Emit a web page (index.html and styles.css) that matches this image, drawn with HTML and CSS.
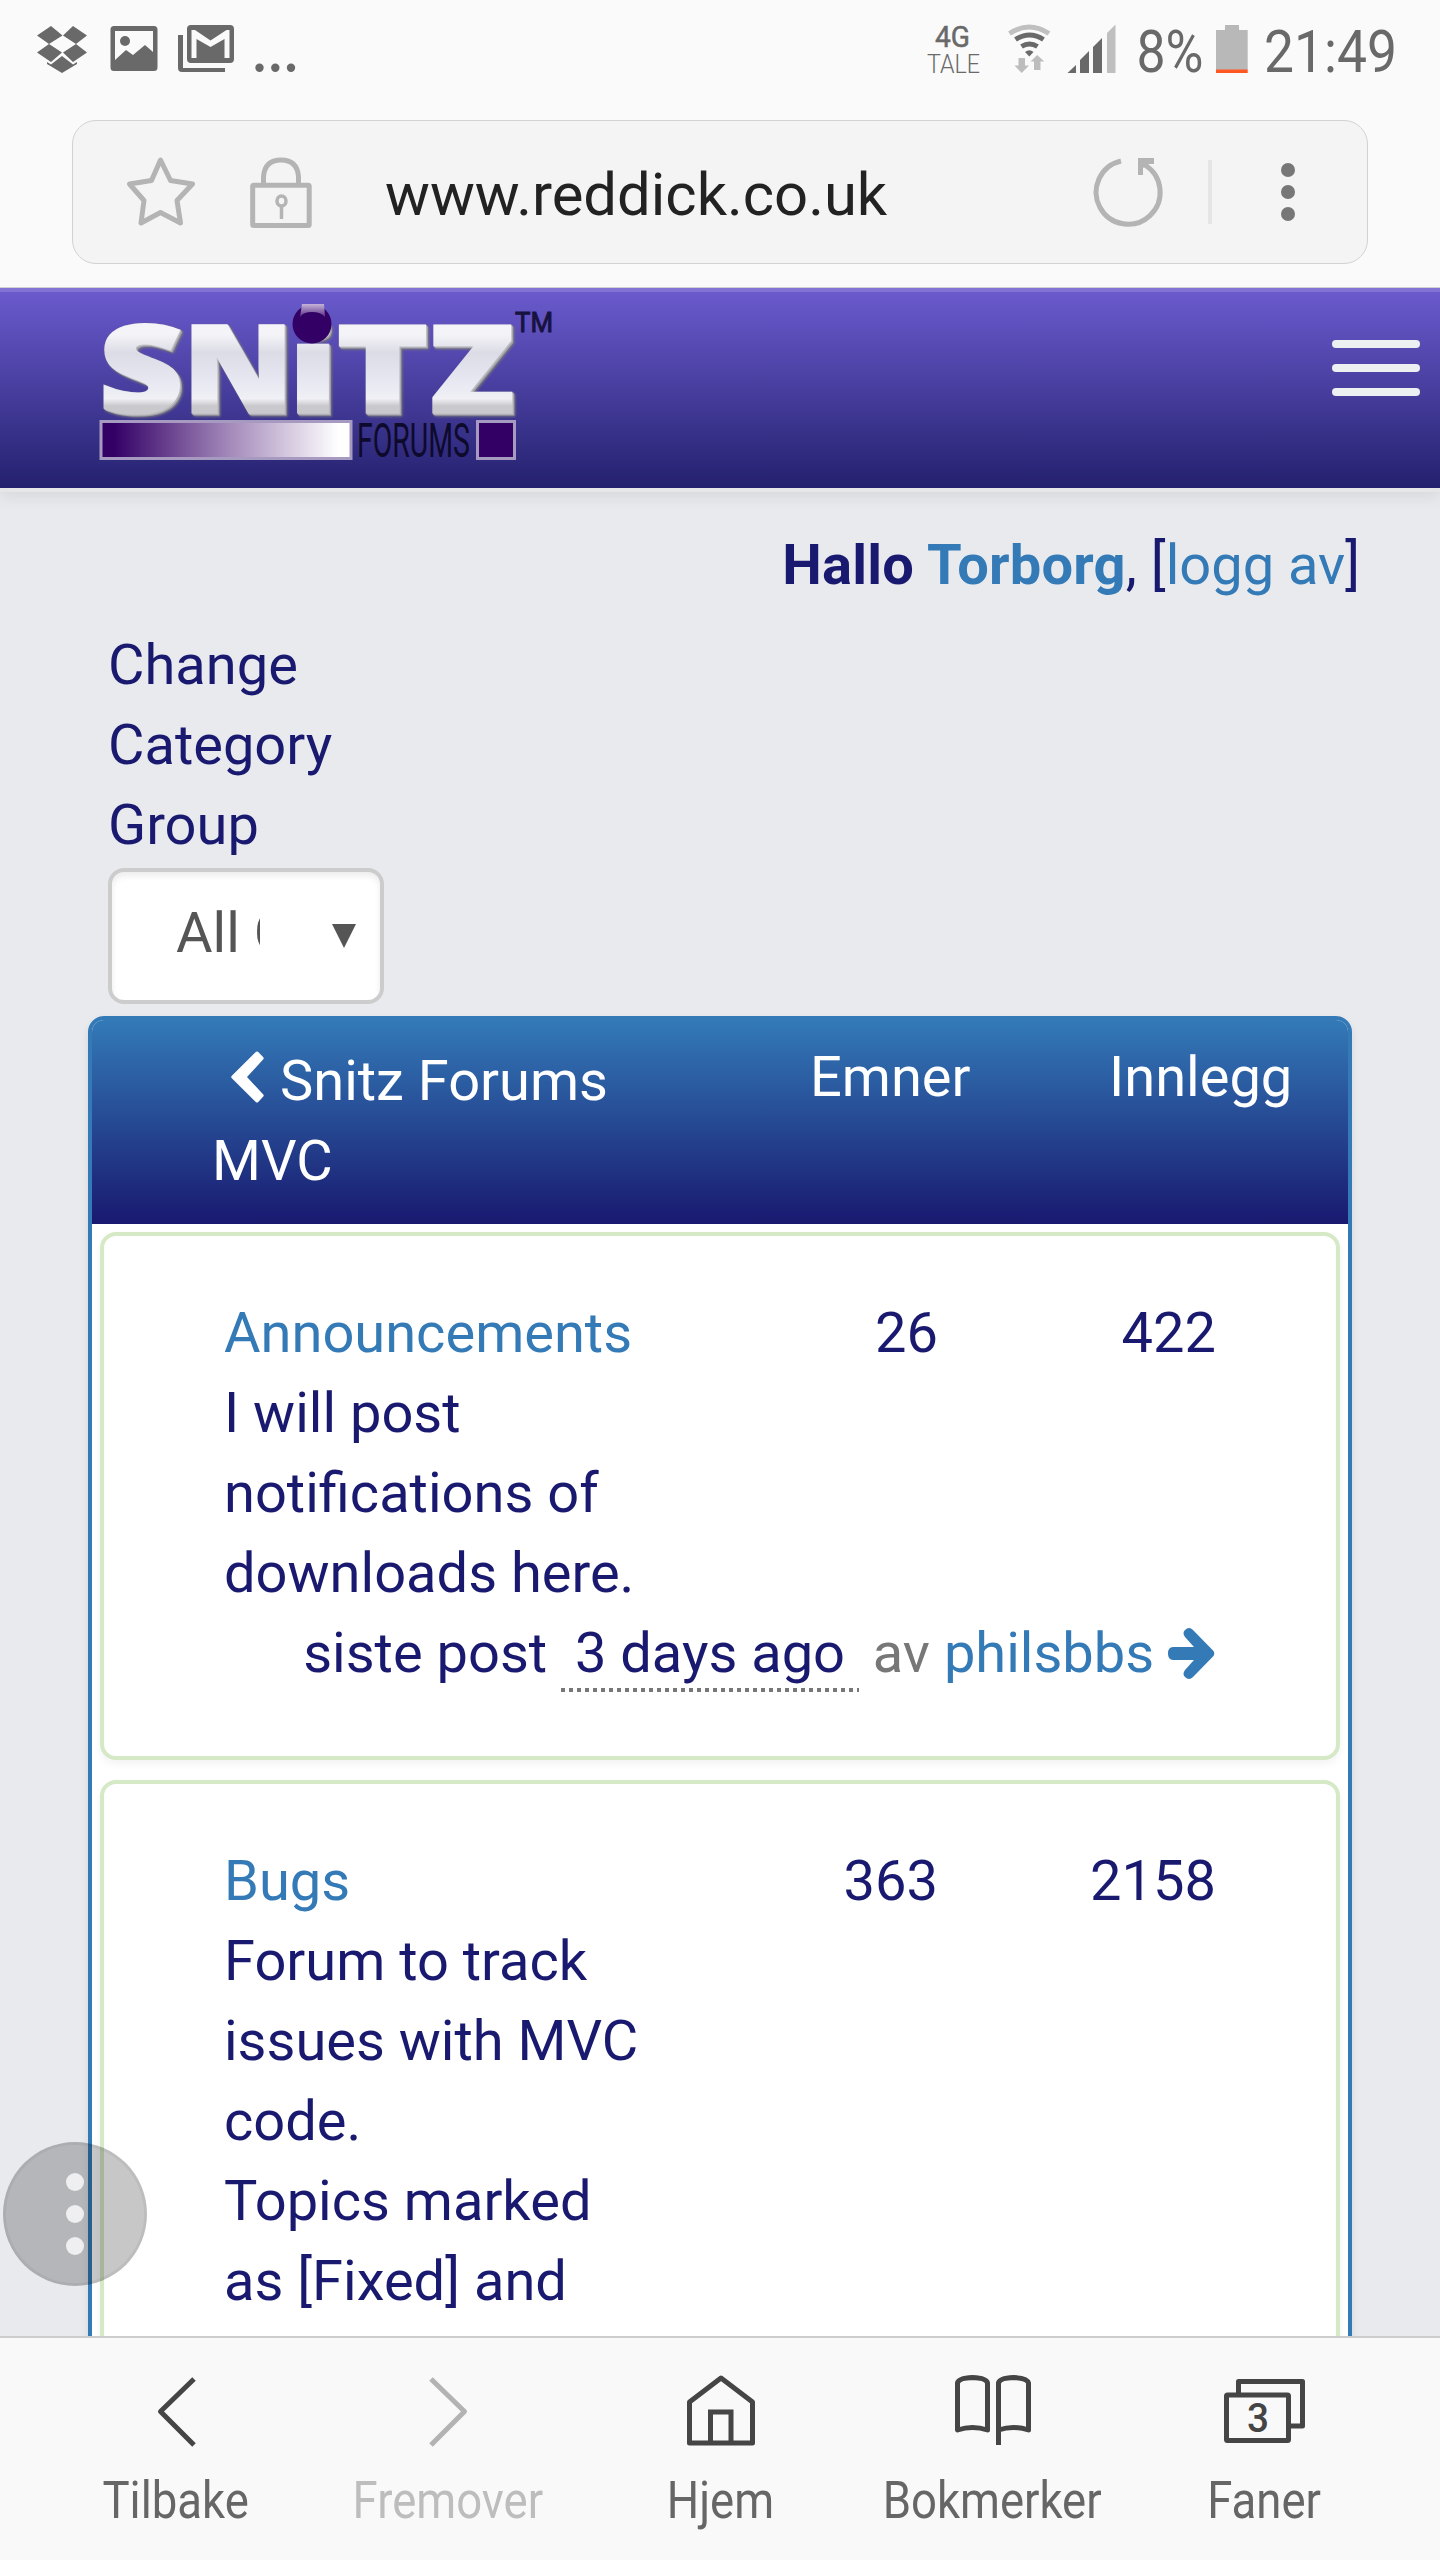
FILE: index.html
```html
<!DOCTYPE html>
<html lang="no">
<head>
<meta charset="utf-8">
<title>Snitz Forums MVC</title>
<link rel="stylesheet" href="styles.css">
</head>
<body>
<div class="phone">
  <header class="status">
    <svg class="status-left" width="320" height="100" viewBox="0 0 320 100" fill="#696969">
      <path d="M51 26l11.500 9.500L49 44 37 35.500zM73 26l14 9.500L76 44 63 35.500zM49 44l13 8.500L51 62 37 52.500zM76 44l11 8.500L73 62 63 52.500zM62 56l11 8.500 4-2.500v2L62 73 47 64v-2l4 2.500z"/>
      <path fill-rule="evenodd" d="M114 26h40q3.500 0 3.500 3.500v38q0 3.500-3.500 3.500h-40q-3.500 0-3.500-3.500v-38q0-3.500 3.500-3.500zM115 31v29l11-10 7 5 12-10 8 7V31z"/>
      <circle cx="125" cy="41" r="5"/>
      <path fill-rule="evenodd" d="M191 25h39q4 0 4 4v30q0 4-4 4h-39q-4 0-4-4V29q0-4 4-4zM191.500 30v28h5V39l14 8 14-8v19h5V30h-3l-16 10.500L195 30z"/>
      <path d="M178 35h5v33h42v4h-43q-4 0-4-4z"/>
      <circle cx="259.500" cy="67.700" r="4.200"/><circle cx="275.300" cy="67.700" r="4.200"/><circle cx="291" cy="67.700" r="4.200"/>
    </svg>
    <svg class="status-right" width="520" height="100" viewBox="920 0 520 100" fill="#696969">
      <text class="net" x="935" y="46.500" font-size="30" font-weight="400" stroke="#696969" stroke-width=".5" textLength="35" lengthAdjust="spacingAndGlyphs">4G</text>
      <text class="net" x="927" y="72.500" font-size="26" font-weight="300" textLength="53" lengthAdjust="spacingAndGlyphs">TALE</text>
      <g fill="none" stroke="#696969" stroke-width="5">
        <path stroke="#c0c0c0" d="M1009.500 33.500q19.500-13 39.500 0"/>
        <path d="M1015.500 39.500q14-9 28 0M1021.500 46.500q8-5 16 0"/>
      </g>
      <path d="M1025 52q4.500-3.500 8.500 0l-4.200 4.500z"/>
      <path fill="#bdbdbd" d="M1018.500 58h6.500v7.500h4L1021.700 73l-7.200-7.500h4zM1034 70h6.500v-8.500h3.800L1037.200 55l-6.700 6.500h3.500z"/>
      <path d="M1067.500 73l8.500-8v8zM1080 73V60l9-9v22zM1093 73V47l9-9v35z"/>
      <path fill="#bfbfbf" d="M1107 73V33l8.500-8.500V73z"/>
      <text x="1136.500" y="71.500" font-size="60" textLength="67" lengthAdjust="spacingAndGlyphs">8%</text>
      <path fill="#b8b8b8" d="M1216 30h9v-5h14v5h8.700v40H1216z"/>
      <path fill="#ff5722" d="M1216 69.500h31.700V73H1216z"/>
      <text x="1264" y="71.500" font-size="60" textLength="133" lengthAdjust="spacingAndGlyphs">21:49</text>
    </svg>
  </header>

  <div class="address">
    <div class="url-box">
      <svg width="200" height="80" viewBox="122 152 200 80" fill="none" stroke="#b4b4b4" stroke-width="5" stroke-linejoin="round">
        <path d="M160.500 160l10 20.500 22 3.500-15.500 16.500 3.500 22.500-20-10.500-19.500 10.500 3-22.500-14.500-16.500 22-3.500z"/>
        <path d="M263.500 184v-7q1-17 17.500-17t17.500 17v7"/>
        <rect x="252.700" y="185.200" width="56.500" height="40.300" rx="1"/>
        <ellipse cx="281.500" cy="201" rx="4.500" ry="5" stroke-width="3.500"/>
        <path stroke-width="3.500" d="M281.500 206v13"/>
      </svg>
      <span class="url">www.reddick.co.uk</span>
      <svg width="220" height="80" viewBox="1087 152 220 80">
        <path fill="none" stroke="#b4b4b4" stroke-width="5" d="M1120 161a32 32 0 1 0 24 4"/>
        <path fill="#b4b4b4" d="M1137 158h16v6h-5l-6 4v7h-5z"/>
        <path fill="#e5e5e5" d="M1207 160h4v64h-4z"/>
        <g fill="#777"><circle cx="1287" cy="170" r="7"/><circle cx="1287" cy="192" r="7"/><circle cx="1287" cy="214" r="7"/></g>
      </svg>
    </div>
  </div>

  <main class="site">
    <div class="navbar">
      <svg class="logo" width="460" height="160" viewBox="100 304 460 160">
        <defs>
          <linearGradient id="silver" gradientUnits="userSpaceOnUse" x1="0" y1="325" x2="0" y2="417">
            <stop offset="0.100" stop-color="#f4f4f8"/><stop offset="0.300" stop-color="#dcdce6"/><stop offset="0.600" stop-color="#e6e7f1"/><stop offset="0.800" stop-color="#f0f0f5"/><stop offset="0.880" stop-color="#c8c8cd"/>
          </linearGradient>
          <linearGradient id="bar"><stop offset="0.050" stop-color="#330066"/><stop offset="0.470" stop-color="#9a7db3"/><stop offset="0.950" stop-color="#fff"/></linearGradient>
          <linearGradient id="shine" x1="0" y1="0" x2="0" y2="1"><stop offset="0" stop-color="#c5b3d8"/><stop offset="1" stop-color="#5a2f86"/></linearGradient>
        </defs>
        <g class="wordmark">
          <text x="99" y="412" textLength="84" lengthAdjust="spacingAndGlyphs">S</text>
          <text x="183" y="412" textLength="110" lengthAdjust="spacingAndGlyphs">N</text>
          <text x="289" y="412" textLength="48" lengthAdjust="spacingAndGlyphs">i</text>
          <text x="337" y="412" textLength="91" lengthAdjust="spacingAndGlyphs">T</text>
          <text x="430" y="412" textLength="84" lengthAdjust="spacingAndGlyphs">Z</text>
        </g>
        <circle cx="312" cy="324" r="19.500" fill="#330066"/>
        <path fill="url(#shine)" d="M302 304h22l1 13q-4-5-13-5t-12 5z"/>
        <rect x="101" y="421.500" width="250" height="37" fill="url(#bar)" stroke="#a79ac0" stroke-width="3"/>
        <text class="forums" x="357" y="457" textLength="113" lengthAdjust="spacingAndGlyphs">FORUMS</text>
        <rect x="477.500" y="421.500" width="37" height="37" fill="#330066" stroke="#a79ac0" stroke-width="3"/>
        <text class="tm" x="515" y="332" textLength="38" lengthAdjust="spacingAndGlyphs">TM</text>
      </svg>
      <div class="burger"><i></i><i></i><i></i></div>
    </div>

    <p class="greeting"><b>Hallo <a>Torborg</a></b>, [<a>logg av</a>]</p>

    <div class="filter">
      <label>Change Category Group</label>
      <div class="select"><span class="value">All Groups</span><span class="caret"></span></div>
    </div>

    <section class="panel">
      <div class="panel-head">
        <div class="title"><svg class="chev" width="33" height="52" viewBox="0 0 33 52"><path fill="#fff" d="M25 .8q1-.8 2 0l5.300 5.500q.8 1 0 2L16 26l16.300 17.500q.8 1 0 2L27 51.200q-1 .8-2 0L.6 27q-.8-1 0-2z"/></svg>Snitz Forums MVC</div>
        <div class="col-a">Emner</div>
        <div class="col-b">Innlegg</div>
      </div>

      <article class="card">
        <div class="row">
          <div class="desc"><a>Announcements</a><br>I will post notifications of downloads here.</div>
          <div class="num topics">26</div>
          <div class="num posts">422</div>
        </div>
        <div class="last">siste post <span class="ago">&nbsp;3 days ago&nbsp;</span> <span class="muted">av</span> <a>philsbbs</a> <svg class="arrow" width="47" height="51" viewBox="0 0 47 51"><path fill="#337ab7" d="M5 19h21L17 9q-3-4 0-7 4-4 8 0l20.500 21q1.500 2.500 0 5L25 49q-4 4-8 0-3-3 0-7l9-10H5q-5 0-5-6.500T5 19z"/></svg></div>
      </article>

      <article class="card">
        <div class="row">
          <div class="desc"><a>Bugs</a><br>Forum to track issues with MVC code.<br>Topics marked as [Fixed] and</div>
          <div class="num topics">363</div>
          <div class="num posts">2158</div>
        </div>
      </article>
    </section>
  </main>

  <nav class="toolbar">
    <div class="tab"><svg width="80" height="80" viewBox="136 2370 80 80"><path d="M194 2379l-33.500 32.500L194 2445"/></svg><span>Tilbake</span></div>
    <div class="tab off"><svg width="80" height="80" viewBox="408 2370 80 80"><path d="M431 2379l33.500 32.500L431 2445"/></svg><span>Fremover</span></div>
    <div class="tab"><svg width="80" height="80" viewBox="680 2370 80 80"><path d="M689.500 2443v-41l31.500-24 31.500 24v41z"/><path stroke-linejoin="miter" d="M710.500 2443v-31h20.500v31"/></svg><span>Hjem</span></div>
    <div class="tab"><svg width="80" height="80" viewBox="952 2370 80 80"><path d="M957.500 2430v-47q1-5 15-5.500 14 .5 15 5.500v47q-15-5-30 0zM998.500 2445v-62q1-5 15-5.500 14 .5 15 5.500v47q-15-5-30 0"/></svg><span>Bokmerker</span></div>
    <div class="tab"><svg width="88" height="80" viewBox="1220 2370 88 80"><path d="M1238.500 2393v-11.500h64V2426H1290"/><rect x="1226.500" y="2395" width="62" height="45.500" rx="1"/><text x="1247" y="2432" textLength="22" lengthAdjust="spacingAndGlyphs">3</text></svg><span>Faner</span></div>
  </nav>

  <div class="floater"><i></i><i></i><i></i></div>
</div>
</body>
</html>
```
FILE: styles.css
```css
* { box-sizing: border-box; }
body { margin: 0; font-family: Roboto, "Liberation Sans", sans-serif; }
svg { display: block; flex: none; }
a { color: #337ab7; }

.phone {
  position: relative;
  width: 1440px;
  height: 2560px;
  display: flex;
  flex-direction: column;
  overflow: hidden;
  background: #fafafa;
}

.status { height: 100px; flex: none; display: flex; justify-content: space-between; }
.address { height: 188px; flex: none; padding: 20px 72px 0; border-bottom: 1px solid #d0d0d0; }
.url-box {
  height: 144px;
  display: flex;
  align-items: center;
  padding: 0 59px 0 49px;
  border: 1px solid #d2d2d2;
  border-radius: 24px;
  background: #f4f4f4;
}
.url { flex: 1; padding-left: 63px; font-size: 59.8px; line-height: 80px; padding-top: 6px; color: #222; }

.site { flex: 1; min-height: 0; overflow: hidden; background: #e8eaee; color: #191970; font-size: 56px; line-height: 80px; }
.navbar {
  height: 204px;
  display: flex;
  justify-content: space-between;
  padding: 12px 20px 0 100px;
  border-top: 4px solid #8273d4;
  border-bottom: 4px solid #e6e6e6;
  background: linear-gradient(#6a5acd, #24216e) padding-box;
  box-shadow: 0 4px 16px rgba(0, 0, 0, .09);
}
.logo { overflow: visible; }
.wordmark {
  font-family: "Open Sans", sans-serif;
  font-weight: 800;
  font-size: 120px;
  fill: url(#silver);
  stroke: url(#silver);
  stroke-width: 3;
  filter: drop-shadow(1px 1px 0 #bcbcc2) drop-shadow(1px 1px 0 #a0a0a5) drop-shadow(1px 1px 1px #77777c);
}
.forums { font-family: Roboto, sans-serif; font-size: 48px; fill: #0d0a2c; }
.tm { font-family: Roboto, sans-serif; font-size: 28px; fill: #17123f; stroke: #17123f; stroke-width: 1; }
.burger { width: 88px; display: flex; flex-direction: column; gap: 16px; padding-top: 36px; }
.burger i { height: 8px; border-radius: 4px; background: #ecf0f1; }

.greeting { margin: 33px 80px 0 0; text-align: right; }
.greeting b { letter-spacing: .25px; }

.filter { width: 276px; margin: 20px 0 12px 108px; }
.filter label { display: block; width: 240px; }
.select {
  height: 136px;
  margin-top: 3px;
  display: flex;
  align-items: center;
  justify-content: space-between;
  padding: 0 24px 6px 64px;
  border: 4px solid #ccc;
  border-radius: 16px;
  background: #fff;
  box-shadow: inset 0 4px 6px rgba(0, 0, 0, .075);
  color: #555;
}
.value { width: 84px; overflow: hidden; white-space: nowrap; }
.caret { width: 24px; height: 24px; margin-top: 6px; background: #555; clip-path: polygon(0 0, 100% 0, 50% 100%); }

.panel { width: 1264px; margin-left: 88px; border: 4px solid #337ab7; border-radius: 16px; background: #fff; box-shadow: 0 4px 8px rgba(0, 0, 0, .08); }
.panel-head {
  height: 204px;
  display: grid;
  grid-template-columns: 597px 300px 1fr;
  padding: 17px 0 0 120px;
  border-radius: 12px 12px 0 0;
  background: linear-gradient(#337ab7, #191970);
  color: #fff;
}
.title { width: 430px; padding-top: 4px; }
.chev { display: inline-block; margin: 0 16px 0 19px; vertical-align: -3px; }
.col-a { padding-left: 1px; }

.card {
  height: 528px;
  margin: 8px 8px 20px;
  padding: 57px 120px 0;
  border: 4px solid #d6e9c6;
  border-radius: 16px;
  background: #fff;
  box-shadow: 0 4px 8px rgba(0, 0, 0, .05);
}
.card + .card { height: 900px; margin-top: 0; }
.row { display: grid; grid-template-columns: 440px 274px 278px; }
.num { text-align: right; }
.last { text-align: right; white-space: nowrap; padding-right: 1px; }
.ago {
  padding-bottom: 6px;
  background: repeating-linear-gradient(90deg, #777 0 4px, transparent 4px 8px) left bottom / 100% 4px no-repeat;
}
.muted { color: #777; }
.arrow { display: inline-block; vertical-align: -7px; }

.toolbar { height: 224px; flex: none; display: grid; grid-template-columns: repeat(5, 272px); justify-content: center; border-top: 2px solid #ccc; background: #f9f9f9; }
.tab { display: flex; flex-direction: column; align-items: center; padding-top: 32px; color: #666; font-size: 52px; line-height: 60px; }
.tab svg { fill: none; stroke: #454545; stroke-width: 5; stroke-linejoin: round; }
.tab svg text { fill: #454545; stroke: none; font-size: 40px; font-weight: 500; }
.tab span { margin: 21px 0 0 0; transform: scaleX(.875); }
.off { color: #bdbdbd; }
.tab.off svg { stroke: #b3b3b3; }

.floater {
  position: absolute;
  left: 3px;
  top: 2142px;
  width: 144px;
  height: 144px;
  display: flex;
  flex-direction: column;
  align-items: center;
  justify-content: center;
  gap: 14px;
  border: 3px solid rgba(0, 0, 0, .05);
  border-radius: 50%;
  background: rgba(0, 0, 0, .22);
}
.floater i { width: 18px; height: 18px; border-radius: 50%; background: #efeff1; }
```
